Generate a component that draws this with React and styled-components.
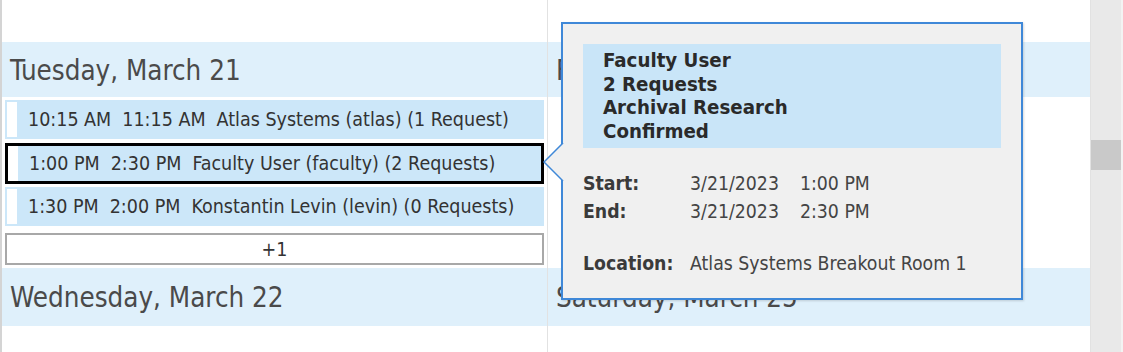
import React from "react";
import styled, { createGlobalStyle } from "styled-components";

const GlobalStyle = createGlobalStyle`
  html, body {
    margin: 0;
    padding: 0;
    background: #fff;
  }
  body {
    font-family: "DejaVu Sans Condensed", "DejaVu Sans", "Liberation Sans", sans-serif;
    color: #333;
    overflow: hidden;
  }
`;

const Screen = styled.div`
  position: relative;
  width: 1123px;
  height: 352px;
  display: flex;
  overflow: hidden;
  background: #fff;
`;

const Calendar = styled.div`
  flex: 1;
  display: grid;
  grid-template-columns: 546px 1fr;
  border-left: 2px solid #d4d4d4;
`;

const Column = styled.div`
  display: flex;
  flex-direction: column;
  border-right: ${p => (p.divider ? "1px solid #e2e2e2" : "none")};
  padding-top: 42px;
`;

const DayHeader = styled.div`
  height: ${p => p.h || 55}px;
  flex-shrink: 0;
  background: #dff0fb;
  display: flex;
  align-items: center;
  padding-left: 8px;
  font-size: 27.5px;
  color: #4a4a4a;
  white-space: nowrap;
  overflow: hidden;
`;

const EventList = styled.div`
  display: flex;
  flex-direction: column;
  padding: 3px 3px 3px 3px;
`;

const EventRow = styled.div`
  box-sizing: border-box;
  height: ${p => (p.selected ? 41 : 39)}px;
  margin-top: ${p => p.gap || 0}px;
  display: flex;
  align-items: center;
  background: #cce7f9;
  border: ${p => (p.selected ? "3px solid #000" : "none")};
  padding: ${p => (p.selected ? "0" : "2px")};
  font-size: 19.5px;
  color: #333;
  white-space: nowrap;
`;

const StatusBar = styled.div`
  width: 10px;
  align-self: stretch;
  background: #fff;
  margin-right: ${p => (p.selected ? 11 : 11)}px;
  margin-left: ${p => (p.selected ? 0 : 0)}px;
`;

const Time = styled.span`
  margin-right: 11px;
`;

const MoreButton = styled.div`
  box-sizing: border-box;
  height: 32px;
  margin-top: 7px;
  border: 2px solid #a8a8a8;
  background: #fff;
  display: flex;
  align-items: center;
  justify-content: center;
  font-size: 19.5px;
  color: #333;
`;

const Spacer = styled.div`
  height: ${p => p.h}px;
  flex-shrink: 0;
`;

const Scrollbar = styled.div`
  width: 30px;
  background: #e9e9e9;
  border-left: 1px solid #e2e2e2;
  border-right: 2px solid #f3f3f3;
  display: flex;
  flex-direction: column;
  padding-top: 140px;
`;

const Thumb = styled.div`
  height: 30px;
  background: #c9c9c9;
`;

const Popup = styled.div`
  position: absolute;
  left: 561px;
  top: 22px;
  width: 462px;
  height: 278px;
  background: #f0f0f0;
  border: 2px solid #3f88d8;
  padding: 20px;
  box-sizing: border-box;
  display: flex;
  flex-direction: column;
  box-shadow: 1px 1px 2px rgba(0, 0, 0, 0.15);
`;

const Arrow = styled.svg`
  position: absolute;
  left: -20px;
  top: 119px;
`;

const TitleBox = styled.div`
  background: #c9e5f8;
  padding: 5px 20px 5px;
  font-weight: bold;
  font-size: 20.3px;
  line-height: 23.5px;
  color: #2a2a2a;
`;

const Fields = styled.div`
  display: grid;
  grid-template-columns: 107px 1fr;
  row-gap: 6px;
  margin-top: 25px;
  font-size: 19.3px;
  line-height: 22px;
  color: #444;
`;

const Label = styled.div`
  font-weight: bold;
  color: #3a3a3a;
  margin-top: ${p => p.gapTop || 0}px;
`;

const Value = styled.div`
  display: flex;
  gap: 21px;
  margin-top: ${p => p.gapTop || 0}px;
`;

const events = [
  { start: "10:15 AM", end: "11:15 AM", who: "Atlas Systems (atlas) (1 Request)", gap: 0 },
  { start: "1:00 PM", end: "2:30 PM", who: "Faculty User (faculty) (2 Requests)", selected: true, gap: 4 },
  { start: "1:30 PM", end: "2:00 PM", who: "Konstantin Levin (levin) (0 Requests)", gap: 3 },
];

export default function App() {
  return (
    <Screen>
      <GlobalStyle />
      <Calendar>
        <Column divider>
          <DayHeader>Tuesday, March 21</DayHeader>
          <EventList>
            {events.map(e => (
              <EventRow key={e.start} selected={e.selected} gap={e.gap}>
                <StatusBar selected={e.selected} />
                <Time>{e.start}</Time>
                <Time>{e.end}</Time>
                <span>{e.who}</span>
              </EventRow>
            ))}
            <MoreButton>+1</MoreButton>
          </EventList>
          <DayHeader h={58}>Wednesday, March 22</DayHeader>
        </Column>
        <Column>
          <DayHeader>Friday, March 24</DayHeader>
          <Spacer h={171} />
          <DayHeader h={58}>Saturday, March 25</DayHeader>
        </Column>
      </Calendar>
      <Scrollbar>
        <Thumb />
      </Scrollbar>

      <Popup>
        <Arrow width="21" height="40" viewBox="0 0 21 40">
          <path d="M20 0 L1 19 L20 38" fill="#f0f0f0" stroke="#3f88d8" strokeWidth="1.5" />
        </Arrow>
        <TitleBox>
          <div>Faculty User</div>
          <div>2 Requests</div>
          <div>Archival Research</div>
          <div>Confirmed</div>
        </TitleBox>
        <Fields>
          <Label>Start:</Label>
          <Value>
            <span>3/21/2023</span>
            <span>1:00 PM</span>
          </Value>
          <Label>End:</Label>
          <Value>
            <span>3/21/2023</span>
            <span>2:30 PM</span>
          </Value>
          <Label gapTop={24}>Location:</Label>
          <Value gapTop={24}>Atlas Systems Breakout Room 1</Value>
        </Fields>
      </Popup>
    </Screen>
  );
}
